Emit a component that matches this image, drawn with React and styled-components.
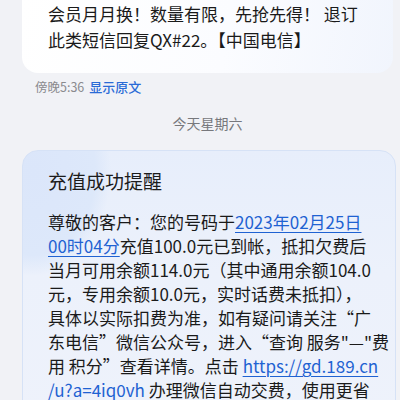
import React from 'react';
import styled, {createGlobalStyle} from 'styled-components';

const GlobalStyle = createGlobalStyle`
  html, body {
    margin: 0;
    padding: 0;
    background: #f1f2f6;
  }
  body {
    font-family: "Noto Sans CJK SC", "Noto Sans", sans-serif;
    color: #1a1a1a;
  }
`;

const Thread = styled.div`
  display: flex;
  flex-direction: column;
  padding: 0 7px 0 22px;
  width: 400px;
  height: 400px;
  box-sizing: border-box;
  overflow: hidden;
`;

const Bubble = styled.div`
  background: linear-gradient(100deg, #ffffff 0%, #fbfcff 55%, #f1f5fd 100%);
  border-radius: 0 0 16px 16px;
  padding: 1px 20px 20px 26px;
  font-size: 17px;
  line-height: 26px;
`;

const Meta = styled.div`
  display: flex;
  align-items: center;
  gap: 5px;
  margin-top: 6px;
  padding-left: 13px;
  font-size: 12.5px;
  line-height: 16px;
`;

const Time = styled.span`
  color: #8a8a8e;
`;

const ShowOriginal = styled.span`
  color: #2a6bd6;
  font-size: 13px;
  font-weight: 500;
`;

const DayLabel = styled.div`
  margin-top: 20px;
  text-align: center;
  font-size: 14px;
  line-height: 16px;
  color: #77787c;
`;

const Card = styled.div`
  margin-top: 19px;
  margin-right: -3px;
  border: 1px solid #d6e2f6;
  border-radius: 16px;
  padding: 17px 20px 20px 25px;
  background:
    radial-gradient(ellipse 78px 105px at 10px 20px, #dbe6fa 0%, #dde8fa 80%, rgba(221, 232, 250, 0) 100%),
    linear-gradient(180deg, #e7eefb 0%, #ecf1fb 45%, #eef2fb 100%);
`;

const Title = styled.div`
  font-size: 19px;
  line-height: 26px;
  color: #1c1c1c;
`;

const Body = styled.div`
  margin-top: 16px;
  font-size: 17px;
  line-height: 24px;
  white-space: nowrap;
`;

const Link = styled.span`
  color: #1f62d2;
  text-decoration: underline;
  text-underline-offset: 3px;
  text-decoration-thickness: 1px;
`;

export default function App() {
  return (
    <>
      <GlobalStyle />
      <Thread>
        <Bubble>
          会员月月换！数量有限，先抢先得！ 退订<br />
          此类短信回复QX#22。【中国电信】
        </Bubble>
        <Meta>
          <Time>傍晚5:36</Time>
          <ShowOriginal>显示原文</ShowOriginal>
        </Meta>
        <DayLabel>今天星期六</DayLabel>
        <Card>
          <Title>充值成功提醒</Title>
          <Body>
            尊敬的客户：您的号码于<Link>2023年02月25日</Link><br />
            <Link>00时04分</Link>充值100.0元已到帐，抵扣欠费后<br />
            当月可用余额114.0元（其中通用余额104.0<br />
            元，专用余额10.0元，实时话费未抵扣），<br />
            具体以实际扣费为准，如有疑问请关注“广<br />
            东电信”微信公众号，进入“查询 服务"—"费<br />
            用 积分”查看详情。点击 <Link>https://gd.189.cn</Link><br />
            <Link>/u?a=4iq0vh</Link> 办理微信自动交费，使用更省
          </Body>
        </Card>
      </Thread>
    </>
  );
}
